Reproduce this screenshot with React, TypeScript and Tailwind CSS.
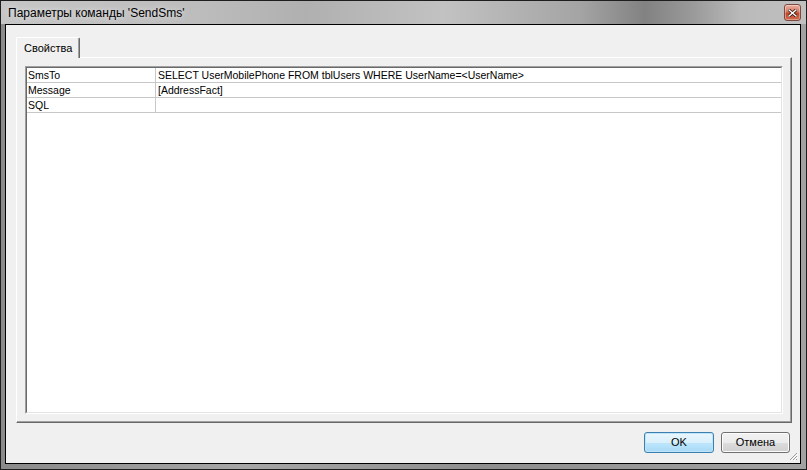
import React from 'react';

const rows = [
  { name: 'SmsTo', value: 'SELECT UserMobilePhone FROM tblUsers WHERE UserName=<UserName>' },
  { name: 'Message', value: '[AddressFact]' },
  { name: 'SQL', value: '' },
];

function CloseButton() {
  return (
    <div className="w-[17px] h-[17px] rounded-[3px] border border-[#7a4a40] bg-[linear-gradient(#eab3a3,#d9775f_45%,#c2452a_55%,#d36a4c)] flex items-center justify-center shadow-[inset_0_0_0_1px_rgba(255,255,255,0.35)]">
      <svg width="9" height="8" viewBox="0 0 9 8">
        <path d="M1 1 L8 7 M8 1 L1 7" stroke="#3a1a14" strokeWidth="3" strokeLinecap="square" />
        <path d="M1 1 L8 7 M8 1 L1 7" stroke="#ffffff" strokeWidth="1.4" strokeLinecap="square" />
      </svg>
    </div>
  );
}

function Button({ label, primary, width }: { label: string; primary?: boolean; width: string }) {
  return (
    <div
      className={
        'h-[21px] rounded-[3px] border flex items-center justify-center text-[11px] text-black ' +
        width +
        (primary
          ? ' border-[#3c7fb1] bg-[linear-gradient(#eaf6fd,#d9f0fc_50%,#bee6fd_50%,#a7d9f5)] shadow-[inset_0_0_0_1px_#bfe4f8]'
          : ' border-[#707070] bg-[linear-gradient(#f2f2f2,#ebebeb_50%,#dddddd_50%,#cfcfcf)] shadow-[inset_0_0_0_1px_#fcfcfc]')
      }
    >
      {label}
    </div>
  );
}

export default function App() {
  return (
    <div className="w-[807px] h-[470px] border border-[#1e1e1e] bg-[linear-gradient(90deg,#8a8a8a,#a6a6a6_30%,#8e8e8e_60%,#a2a2a2)] flex flex-col font-['Liberation_Sans',Arial,sans-serif]">
      {/* заголовок */}
      <div className="h-[23px] flex items-center justify-between pl-[7px] pr-[5px] bg-[linear-gradient(90deg,#c6c6c6,#bcbcbc_25%,#b0b0b0_38%,#c2c2c2_55%,#a4a4a4_72%,#828282_80%,#9a9a9a_86%,#bababa_92%,#c0c0c0)]">
        <span className="text-[12px] text-black [text-shadow:0_0_6px_rgba(255,255,255,0.8)]">
          Параметры команды 'SendSms'
        </span>
        <CloseButton />
      </div>

      <div className="flex-1 flex px-[4px] pr-[5px] pb-[5px]">
        <div className="relative flex-1 border border-black bg-[#f0f0f0] flex flex-col pt-[12px] pl-[10px] pr-[8px]">
          {/* вкладка */}
          <div className="flex h-[20px]">
            <div className="relative z-10 w-[64px] h-[21px] bg-[#f0f0f0] border-t border-l border-white border-r border-r-[#696969] shadow-[inset_-1px_0_0_#a0a0a0] rounded-t-[2px] flex items-center pl-[7px] text-[11px] text-black">
              Свойства
            </div>
          </div>

          {/* панель */}
          <div className="h-[366px] border-t border-l border-white border-r border-b border-r-[#696969] border-b-[#696969] shadow-[inset_-1px_-1px_0_#a0a0a0] p-[8px] flex">
            <div className="flex-1 border border-t-[#a0a0a0] border-l-[#a0a0a0] border-b-white border-r-white flex">
              <div className="flex-1 border border-t-[#696969] border-l-[#696969] border-b-[#e3e3e3] border-r-[#e3e3e3] bg-white">
                {rows.map((r) => (
                  <div key={r.name} className="flex h-[15px] border-b border-[#c8c8c8] text-[10.5px] leading-[14px] text-black">
                    <div className="w-[129px] border-r border-[#c8c8c8] pl-[1px]">{r.name}</div>
                    <div className="flex-1 pl-[2px] whitespace-nowrap">{r.value}</div>
                  </div>
                ))}
              </div>
            </div>
          </div>

          {/* кнопки */}
          <div className="flex justify-end gap-[7px] pt-[9px] pr-[2px]">
            <Button label="OK" primary width="w-[70px]" />
            <Button label="Отмена" width="w-[69px]" />
          </div>

          <svg className="absolute right-[2px] bottom-[2px]" width="10" height="10" viewBox="0 0 10 10">
            <path d="M9 2 L2 9 M9 5 L5 9 M9 8 L8 9" stroke="#9a9a9a" strokeWidth="1" />
            <path d="M10 3 L3 10 M10 6 L6 10" stroke="#ffffff" strokeWidth="1" />
          </svg>
        </div>
      </div>
    </div>
  );
}
